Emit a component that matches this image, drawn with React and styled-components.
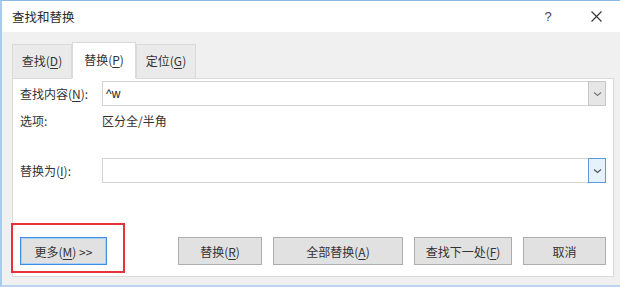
import React from "react";
import styled, { createGlobalStyle } from "styled-components";

const GlobalStyle = createGlobalStyle`
  html, body {
    margin: 0;
    padding: 0;
    background: #ffffff;
  }
  body {
    font-family: "Noto Sans CJK SC", "Liberation Sans", sans-serif;
    color: #333333;
  }
`;

const Window = styled.div`
  width: 620px;
  height: 287px;
  box-sizing: border-box;
  border-top: 1px solid #8fb8e2;
  border-left: 2px solid #a9cbeb;
  border-bottom: 2px solid #b9d5ef;
  background: #f0f0f0;
  display: flex;
  flex-direction: column;
  overflow: hidden;
`;

const TitleBar = styled.div`
  height: 31px;
  background: #ffffff;
  display: flex;
  align-items: center;
  padding: 0 0 0 10px;
  font-size: 12.5px;
  color: #2b2b2b;
`;

const Title = styled.span`
  flex: 1;
`;

const TitleButton = styled.span`
  width: 48px;
  display: flex;
  justify-content: center;
  align-items: center;
  font-size: 13px;
  color: #444;
  font-family: "Liberation Sans", sans-serif;
`;

const Body = styled.div`
  flex: 1;
  display: flex;
  flex-direction: column;
  padding: 0 6px 0 10px;
`;

const Tabs = styled.div`
  display: flex;
  align-items: flex-end;
  height: 46px;
  position: relative;
  z-index: 1;
`;

const Tab = styled.div`
  width: ${(p) => p.$w}px;
  height: ${(p) => (p.$active ? 37 : 35)}px;
  box-sizing: border-box;
  display: flex;
  align-items: center;
  justify-content: center;
  font-size: 12px;
  background: ${(p) => (p.$active ? "#ffffff" : "#eaeaea")};
  border: 1px solid #dadada;
  border-bottom: ${(p) => (p.$active ? "1px solid #ffffff" : "1px solid #dadada")};
  margin-bottom: -1px;
  color: #333;
  padding-bottom: 2px;
`;

const Key = styled.u`
  text-decoration: underline;
  text-underline-offset: 2px;
`;

const Panel = styled.div`
  height: 199px;
  box-sizing: border-box;
  background: #ffffff;
  border: 1px solid #dadada;
  padding: 2px 7px 0 7px;
  display: flex;
  flex-direction: column;
`;

const Row = styled.div`
  display: flex;
  align-items: center;
  margin-top: ${(p) => p.$top || 0}px;
  height: ${(p) => p.$h || 25}px;
  font-size: 12px;
`;

const Label = styled.span`
  width: 82px;
  flex: none;
`;

const Combo = styled.div`
  flex: 1;
  height: 25px;
  box-sizing: border-box;
  border: 1px solid #d2d2d2;
  display: flex;
  align-items: stretch;
  background: #fff;
`;

const ComboText = styled.span`
  flex: 1;
  padding-left: 3px;
  display: flex;
  align-items: center;
  font-size: 12px;
  font-family: "Liberation Sans", sans-serif;
  color: #222;
`;

const DropButton = styled.span`
  width: 18px;
  box-sizing: border-box;
  display: flex;
  align-items: center;
  justify-content: center;
  background: ${(p) => (p.$focus ? "#e5f1fb" : "#e6e6e6")};
  border: 1px solid ${(p) => (p.$focus ? "#5a9be0" : "#c6c6c6")};
  margin: -1px -1px -1px 0;
`;

const ButtonRow = styled.div`
  display: flex;
  align-items: flex-start;
  margin-top: 40px;
`;

const Highlight = styled.div`
  width: 114px;
  height: 50px;
  box-sizing: border-box;
  border: 2px solid #e8313a;
  margin-left: -9px;
  padding: 12px 0 0 7px;
`;

const Button = styled.button`
  width: ${(p) => p.$w}px;
  height: 28px;
  margin-top: 14px;
  margin-left: ${(p) => p.$gap || 0}px;
  box-sizing: border-box;
  background: #e1e1e1;
  border: 1px solid ${(p) => (p.$focus ? "#3d8ee0" : "#adadad")};
  box-shadow: ${(p) => (p.$focus ? "inset 0 0 0 1px #a9d0f5" : "none")};
  font-family: "Noto Sans CJK SC", "Liberation Sans", sans-serif;
  font-size: 12px;
  color: #333;
  padding: 0;
  display: flex;
  align-items: center;
  justify-content: center;
`;

const HighlightButton = styled(Button)`
  margin: 0;
`;

const Chevron = ({ color = "#777" }) => (
  <svg width="9" height="6" viewBox="0 0 9 6">
    <path d="M1 1.5 L4.5 4.5 L8 1.5" fill="none" stroke={color} strokeWidth="1.2" />
  </svg>
);

const Close = () => (
  <svg width="11" height="11" viewBox="0 0 11 11">
    <path d="M0.5 0.5 L10.5 10.5 M10.5 0.5 L0.5 10.5" stroke="#333" strokeWidth="1.1" />
  </svg>
);

export default function App() {
  return (
    <>
      <GlobalStyle />
      <Window>
        <TitleBar>
          <Title>查找和替换</Title>
          <TitleButton>?</TitleButton>
          <TitleButton>
            <Close />
          </TitleButton>
        </TitleBar>
        <Body>
          <Tabs>
            <Tab $w={60}>
              查找(<Key>D</Key>)
            </Tab>
            <Tab $w={64} $active>
              替换(<Key>P</Key>)
            </Tab>
            <Tab $w={60}>
              定位(<Key>G</Key>)
            </Tab>
          </Tabs>
          <Panel>
            <Row>
              <Label>
                查找内容(<Key>N</Key>):
              </Label>
              <Combo>
                <ComboText>^w</ComboText>
                <DropButton>
                  <Chevron />
                </DropButton>
              </Combo>
            </Row>
            <Row $top={5} $h={18}>
              <Label>选项:</Label>
              <span>区分全/半角</span>
            </Row>
            <Row $top={29}>
              <Label>
                替换为(<Key>I</Key>):
              </Label>
              <Combo>
                <ComboText />
                <DropButton $focus>
                  <Chevron color="#555" />
                </DropButton>
              </Combo>
            </Row>
            <ButtonRow>
              <Highlight>
                <HighlightButton $w={87} $focus>
                  更多(<Key>M</Key>) &gt;&gt;
                </HighlightButton>
              </Highlight>
              <Button $w={84} $gap={53}>
                替换(<Key>R</Key>)
              </Button>
              <Button $w={130} $gap={11}>
                全部替换(<Key>A</Key>)
              </Button>
              <Button $w={98} $gap={11}>
                查找下一处(<Key>F</Key>)
              </Button>
              <Button $w={83} $gap={11}>
                取消
              </Button>
            </ButtonRow>
          </Panel>
        </Body>
      </Window>
    </>
  );
}
